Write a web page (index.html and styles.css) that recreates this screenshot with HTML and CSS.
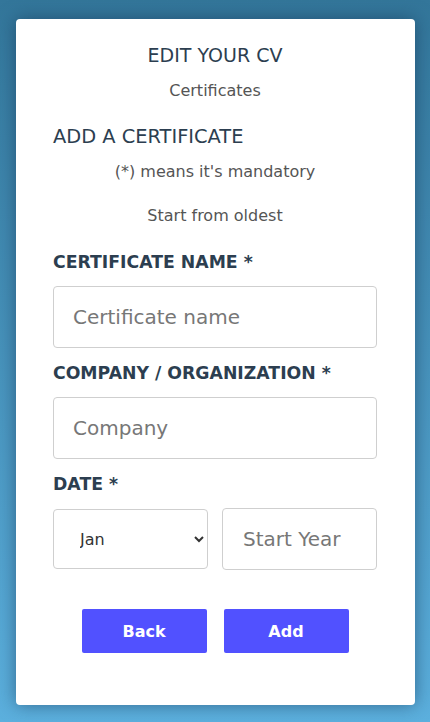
FILE: index.html
```html
<!DOCTYPE html>
<html lang="en">
<head>
<meta charset="UTF-8">
<title>Edit your CV - Certificates</title>
<meta name="viewport" content="width=device-width, initial-scale=1.0">
<link rel="stylesheet" href="styles.css">
</head>
<body>

<div class="card">
  <h1 class="title">EDIT YOUR CV</h1>
  <p class="sub">Certificates</p>

  <h2 class="section">ADD A CERTIFICATE</h2>
  <p class="note">(*) means it's mandatory</p>
  <p class="note hint">Start from oldest</p>

  <form class="form">
    <label class="label" for="cert">CERTIFICATE NAME *</label>
    <input id="cert" class="field" placeholder="Certificate name">

    <label class="label" for="company">COMPANY / ORGANIZATION *</label>
    <input id="company" class="field" placeholder="Company">

    <label class="label" for="month">DATE *</label>
    <div class="date-row">
      <select id="month" class="field select">
        <option>Jan</option><option>Feb</option><option>Mar</option>
        <option>Apr</option><option>May</option><option>Jun</option>
        <option>Jul</option><option>Aug</option><option>Sep</option>
        <option>Oct</option><option>Nov</option><option>Dec</option>
      </select>
      <input class="field year" placeholder="Start Year">
    </div>

    <div class="actions">
      <button type="button" class="btn">Back</button>
      <button type="button" class="btn">Add</button>
    </div>
  </form>
</div>

</body>
</html>
```

FILE: styles.css
```css
:root{
  --text:#2c3e50;
  --muted:#555;
  --border:#cfcfcf;
  --accent:#5151ff;
}
*{box-sizing:border-box}
body{
  margin:0;
  height:722px;
  overflow:hidden;
  font-family:"DejaVu Sans", Arial, sans-serif;
  background:linear-gradient(#33769a, #5cb0de);
  padding:19px 15px 0 16px;
}

/* CARD */
.card{
  background:#fff;
  height:686px;
  border-radius:4px;
  box-shadow:0 0 18px rgba(20,50,80,.55);
  padding:24px 38px 0 37px;
  color:var(--text);
}
.title{
  margin:0;
  text-align:center;
  font-size:19px;
  font-weight:500;
  line-height:24px;
}
.sub{
  margin:14px 0 0;
  text-align:center;
  font-size:16px;
  color:var(--muted);
  line-height:20px;
}
.section{
  margin:24px 0 0;
  font-size:19.4px;
  font-weight:500;
  line-height:24px;
}
.note{
  margin:13px 0 0;
  text-align:center;
  font-size:16px;
  line-height:20px;
  color:var(--muted);
}
.hint{margin-top:24px}

/* FORM */
.form{
  display:flex;
  flex-direction:column;
  margin-top:24px;
}
.label{
  font-size:17.3px;
  font-weight:600;
  line-height:24px;
  margin-bottom:12px;
}
.field{
  height:62px;
  border:1px solid var(--border);
  border-radius:4px;
  padding:0 19px;
  font-family:inherit;
  font-size:20px;
  color:#333;
  margin-bottom:13px;
  background:#fff;
}
.field::placeholder{color:#777}
.date-row{
  display:grid;
  grid-template-columns:minmax(0,1fr) minmax(0,1fr);
  gap:14px;
  align-items:center;
}
.date-row .field{
  width:100%;
  margin-bottom:0;
}
.select{
  height:60px;
  padding:0 8px 0 22px;
  font-size:16px;
}
.year{padding-left:20px}

.actions{
  display:flex;
  justify-content:center;
  gap:17px;
  margin-top:39px;
}
.btn{
  width:125px;
  height:44px;
  border:none;
  border-radius:2px;
  background:var(--accent);
  color:#fff;
  font-family:inherit;
  font-size:16px;
  font-weight:700;
}
```
